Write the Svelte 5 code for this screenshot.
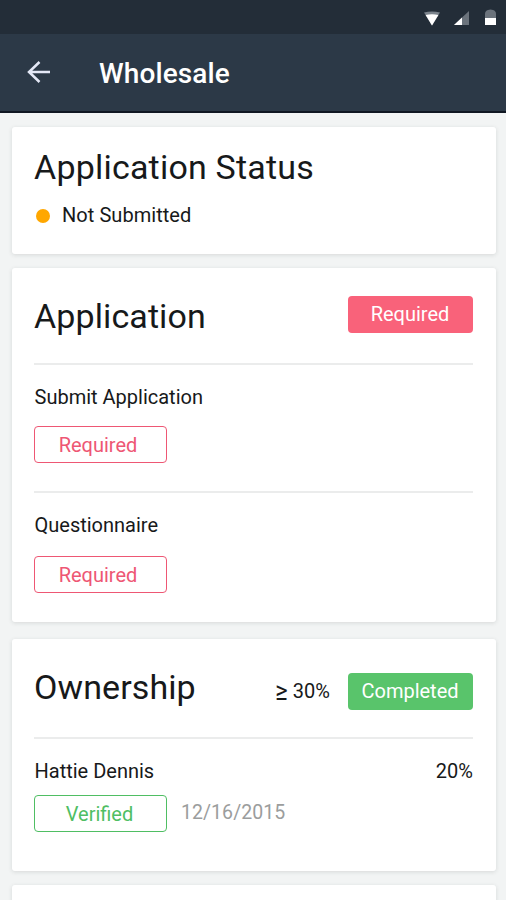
<script>
  const tasks = [
    { name: 'Submit Application', status: 'Required' },
    { name: 'Questionnaire', status: 'Required' }
  ];
</script>

<div class="screen">
  <div class="statusbar">
    <svg class="wifi" width="18" height="16" viewBox="0 0 18 16">
      <path d="M1 1.500Q9 -0.500 17 1.500L9 14.500Z" fill="#7b838c" />
      <path d="M2.600 4Q9 2.400 15.400 4L9 14.500Z" fill="#fff" />
    </svg>
    <svg class="signal" width="18" height="16" viewBox="0 0 18 16">
      <path d="M17 0V14H2Z" fill="#6b737c" />
      <path d="M10 6.500V14H2Z" fill="#fff" />
    </svg>
    <svg class="battery" width="11" height="17" viewBox="0 0 11 17">
      <path d="M0 16V5Q0 1.800 3 1Q5.500 0 8 1Q11 1.800 11 5V16Z" fill="#6b737c" />
      <path d="M0 9H11V16H0Z" fill="#fff" />
    </svg>
  </div>
  <header class="appbar">
    <svg width="26" height="24" viewBox="0 0 26 24" fill="none" stroke="#e4e8f6" stroke-width="2.5">
      <path d="M24 12H3M13.500 2L3 12L13.500 22" />
    </svg>
    <h1>Wholesale</h1>
  </header>

  <main>
    <section class="card summary">
      <h2 class="wide">Application Status</h2>
      <p class="state"><span class="dot"></span><span>Not Submitted</span></p>
    </section>

    <section class="card application">
      <div class="head">
        <h2>Application</h2>
        <span class="badge red">Required</span>
      </div>
      {#each tasks as task}
        <div class="task">
          <p class="label">{task.name}</p>
          <button class="outline red-line">{task.status}</button>
        </div>
      {/each}
    </section>

    <section class="card ownership">
      <div class="head">
        <h2>Ownership</h2>
        <div class="group">
          <span class="share"><span class="sign">≥</span> 30%</span>
          <span class="badge green">Completed</span>
        </div>
      </div>
      <div class="owner">
        <div class="line"><span class="name">Hattie Dennis</span><span class="percent">20%</span></div>
        <div class="check">
          <button class="outline green-line">Verified</button>
          <span class="date">12/16/2015</span>
        </div>
      </div>
    </section>

    <section class="card next"></section>
  </main>
</div>

<style>
  :global(body) { margin: 0; }
  .screen {
    width: 506px;
    height: 900px;
    overflow: hidden;
    background: #f2f4f4;
    color: #17191a;
    font: 400 20px/24px Roboto, sans-serif;
  }
  h1, h2, p { margin: 0; }
  .statusbar {
    display: flex;
    box-sizing: border-box;
    height: 34px;
    padding: 11px 10px 0 0;
    justify-content: flex-end;
    align-items: flex-start;
    background: #232d38;
  }
  .signal { margin-left: 11px; }
  .battery { margin-left: 15px; margin-top: -2px; }
  .appbar {
    display: flex;
    box-sizing: border-box;
    height: 79px;
    padding: 0 26px 1px;
    align-items: center;
    background: #2c3947;
    border-bottom: 2px solid #101722;
  }
  .appbar h1 {
    margin-left: 47px;
    padding-top: 4px;
    color: #fff;
    font-size: 28px;
    line-height: 34px;
    font-weight: 500;
    letter-spacing: 0.1px;
  }
  main {
    display: flex;
    flex-direction: column;
    padding: 14px 10px 0 12px;
  }
  .card {
    box-sizing: border-box;
    padding: 28px 23px 0 22px;
    background: #fff;
    border-radius: 3px;
    box-shadow: 0 1px 4px rgba(50, 60, 60, 0.14);
  }
  h2 {
    font-size: 34px;
    line-height: 40px;
    font-weight: 400;
    letter-spacing: 0.1px;
  }
  .wide { letter-spacing: 0.2px; }
  .summary { height: 127px; padding-top: 20px; }
  .application { height: 354px; margin-top: 14px; }
  .ownership { height: 232px; margin-top: 17px; }
  .next { height: 60px; margin-top: 14px; }
  .state { display: flex; align-items: center; margin-top: 16px; letter-spacing: 0.05px; }
  .dot { width: 14px; height: 14px; margin: 1px 12.500px 0 1.500px; border-radius: 50%; background: #ffa700; }
  .head { display: flex; height: 67px; justify-content: space-between; align-items: flex-start; }
  .ownership .head { height: 70px; }
  .group { display: flex; margin-top: 6px; align-items: center; gap: 18px; }
  .sign { display: inline-block; transform: translateY(1.5px) scale(1.2, 1.35); transform-origin: right 70%; }
  .badge {
    width: 125px;
    height: 36.500px;
    line-height: 37px;
    text-align: center;
    color: #fff;
    border-radius: 4px;
  }
  .red { background: #f9627a; text-indent: -1px; }
  .green { background: #59c46b; text-indent: -1px; }
  .task, .owner { border-top: 2px solid #ebecec; }
  .task { box-sizing: border-box; height: 128px; padding-top: 20px; }
  .task + .task { height: 110px; }
  .label, .name { padding-left: 0.5px; }
  .outline {
    box-sizing: border-box;
    display: block;
    width: 133px;
    height: 37px;
    margin: 0;
    padding: 0 5px 0 0;
    background: #fff;
    border: 1.500px solid;
    border-radius: 4px;
    font: inherit;
  }
  .task .outline { margin-top: 17px; }
  .task + .task .outline { margin-top: 19px; }
  .red-line { color: #ee5774; }
  .green-line { color: #4fbe63; padding: 0 2px 0 0; }
  .owner { padding-top: 20px; }
  .line { display: flex; justify-content: space-between; }
  .check { display: flex; margin-top: 12px; align-items: center; gap: 14px; }
  .date { padding-bottom: 2px; color: #9b9d9d; font-size: 19.500px; letter-spacing: 0.05px; }
</style>
